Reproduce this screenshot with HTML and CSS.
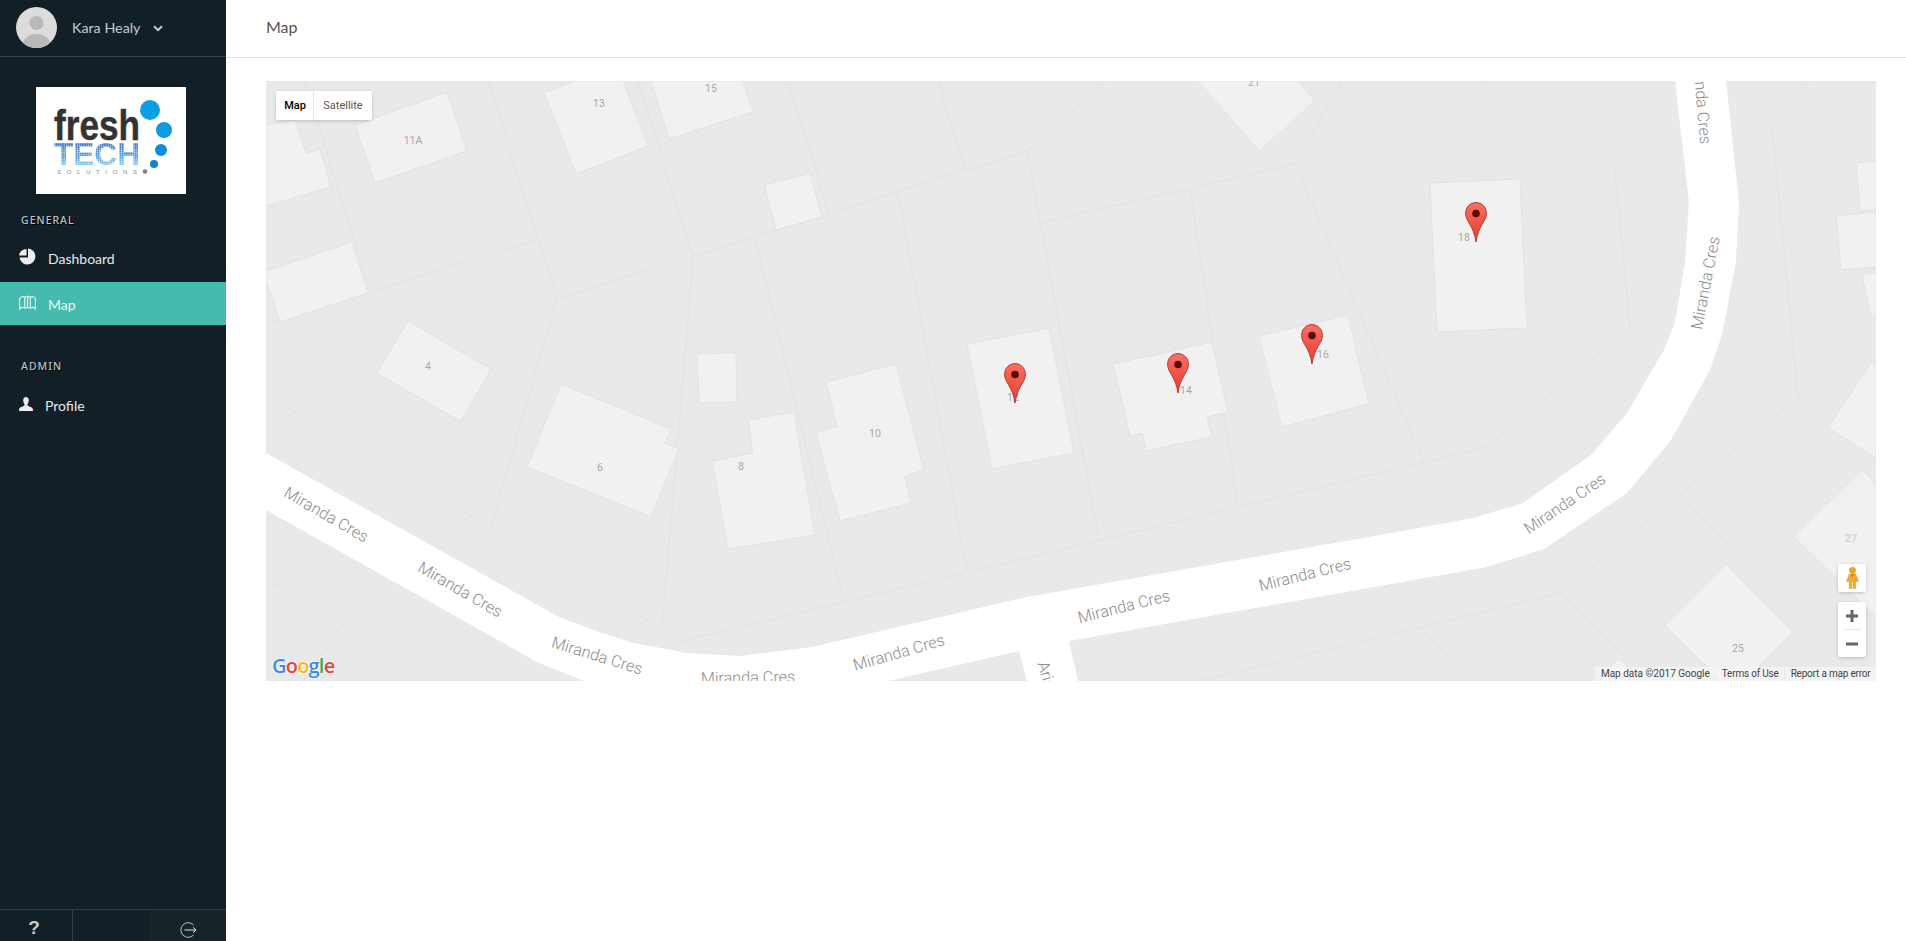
FILE: index.html
```html
<!DOCTYPE html>
<html lang="en">
<head>
<meta charset="utf-8">
<title>Map</title>
<link rel="stylesheet" href="styles.css">
</head>
<body>
<div class="app">
  <aside class="sidebar">
    <div class="profile">
      <svg class="avatar" viewBox="0 0 41 41"><defs><clipPath id="av"><circle cx="20.5" cy="20.5" r="20.5"/></clipPath></defs><g clip-path="url(#av)"><rect width="41" height="41" fill="#dcdcdc"/><circle cx="20.5" cy="16" r="7" fill="#b9b9b9"/><ellipse cx="20.5" cy="38" rx="14" ry="11" fill="#b9b9b9"/></g></svg>
      <span class="name">Kara Healy</span>
      <svg class="chev" viewBox="0 0 10 7"><path d="M1 1.2 5 5.2 9 1.2" fill="none" stroke="#c5d0d6" stroke-width="2"/></svg>
    </div>
    <div class="logo">
      <svg viewBox="0 0 150 107" width="150" height="107">
        <defs>
          <linearGradient id="tg" x1="0" y1="0" x2="0" y2="1"><stop offset="0" stop-color="#2f62c0"/><stop offset=".55" stop-color="#4f9ede"/><stop offset="1" stop-color="#a8dcf2"/></linearGradient>
          <pattern id="dp" width="2.2" height="2.2" patternUnits="userSpaceOnUse"><rect width="1.9" height="1.9" fill="#fff"/></pattern>
          <mask id="dm" maskUnits="userSpaceOnUse" x="0" y="0" width="150" height="107"><rect width="150" height="107" fill="url(#dp)"/></mask>
        </defs>
        <text class="lg-fresh" x="18" y="53" textLength="86" lengthAdjust="spacingAndGlyphs">fresh</text>
        <text class="lg-tech" x="18" y="78" textLength="86" lengthAdjust="spacingAndGlyphs" fill="url(#tg)" mask="url(#dm)">TECH</text>
        <text class="lg-sol" x="21" y="87" textLength="80">SOLUTIONS</text>
        <circle cx="114" cy="23" r="10" fill="#0a9fe3"/><circle cx="128" cy="43" r="8" fill="#0a9be0"/><circle cx="125" cy="63" r="6" fill="#0a8fd8"/><circle cx="118" cy="77" r="4" fill="#0a85cc"/><circle cx="109" cy="84.500" r="2.300" fill="#808080"/>
      </svg>
    </div>
    <h3 class="sec sec-general">GENERAL</h3>
    <a class="item item-dash">
      <svg class="ico" viewBox="0 0 17 17"><path d="M7.500 1.500A7.500 7.500 0 0 0 0 8h7.500Z" fill="#eee" transform="translate(0 -.6)"/><path d="M9 .5a8 8 0 1 1-8.500 9H9Z" fill="#eee"/></svg>
      <span>Dashboard</span>
    </a>
    <a class="item active">
      <svg class="ico" viewBox="0 0 17 15"><path d="M.6 3.500C2 1.500 4 1 5.700 2.500 7 1 10 1 11.300 2.500 13 1 15 1.500 16.400 3.500V14C15 12 13 11.800 11.300 13.300 10 12 7 12 5.700 13.300 4 11.800 2 12 .6 14ZM5.700 2.500V13.300M11.300 2.500V13.300M8.500 2V12.500" fill="none" stroke="#e9f6f4" stroke-width="1.100"/></svg>
      <span>Map</span>
    </a>
    <h3 class="sec sec-admin">ADMIN</h3>
    <a class="item item-profile">
      <svg class="ico-u" viewBox="0 0 15 15"><path d="M7.500 0C5.500 0 4.500 1.400 4.500 3.400 4.500 5.500 5.500 7 6 8 6 9.500 4 10 1.800 11 .5 11.600 0 12.500 0 15H15C15 12.500 14.500 11.600 13.200 11 11 10 9 9.500 9 8 9.500 7 10.500 5.500 10.500 3.400 10.500 1.400 9.500 0 7.500 0Z" fill="#eee"/></svg>
      <span>Profile</span>
    </a>
    <div class="foot">
      <div class="foot-q">?</div>
      <div class="foot-mid"></div>
      <div class="foot-out"><svg viewBox="0 0 18 18" width="18" height="18"><path d="M14.500 4A7.300 7.300 0 1 0 14.500 14" fill="none" stroke="#b9c2c7" stroke-width="1"/><path d="M5.500 9H17M14 6.300 17 9 14 11.700" fill="none" stroke="#dfe4e6" stroke-width="1"/></svg></div>
    </div>
  </aside>
  <main class="main">
    <header class="topbar"><h1>Map</h1></header>
    <section class="content">
      <div class="map">
        <svg class="canvas" viewBox="266 81 1610 600" width="1610" height="600">
          <defs>
            <linearGradient id="pg" x1="0" y1="0" x2="0" y2="1"><stop offset="0" stop-color="#fb6f64"/><stop offset="1" stop-color="#e53d2d"/></linearGradient>
            <g id="pin">
              <path d="M11 .6C5 .6.6 5.300.6 11.500.6 19.500 8.800 23.500 11 40 13.200 23.500 21.400 19.500 21.400 11.500 21.400 5.300 17 .6 11 .6Z" fill="url(#pg)" stroke="#b83a30" stroke-width="1"/>
              <circle cx="11" cy="11.500" r="3.800" fill="#5a0c08"/>
            </g>
          </defs>
          <polygon class="road" points="266,453 559,617 602,633 634,643 687,653 741,656 812,647 1027,597 1380,535 1473,518 1523,503 1591,455 1627,413 1664,350 1675,322 1685,262 1689,202 1675,81 1726,81 1739,202 1736,262 1722,335 1710,370 1671,440 1627,493 1544,549 1487,567 1069,641 1078,681 1027,681 1019,651 888,681 584,681 537,662 266,510"/>

          <polyline class="lot" points="305,81 370,292"/>
          <polyline class="lot" points="488,81 557,299 491,526"/>
          <polyline class="lot" points="266,325 538,239"/>
          <polyline class="lot" points="557,299 1027,151 1107,81"/>
          <polyline class="lot" points="638,81 693,257 662,628"/>
          <polyline class="lot" points="755,238 844,602"/>
          <polyline class="lot" points="266,395 682,641 1487,447 1630,328 1615,170 1481,81"/>
          <polyline class="lot" points="898,192 967,572"/>
          <polyline class="lot" points="1027,151 1099,540"/>
          <polyline class="lot" points="1040,223 1295,164 1342,81"/>
          <polyline class="lot" points="1190,189 1238,507"/>
          <polyline class="lot" points="1295,164 1424,462"/>
          <polyline class="lot" points="938,81 966,171"/>
          <polyline class="lot" points="788,81 829,213"/>
          <polyline class="lot" points="1809,81 1772,127 1798,397 1561,593 1199,681"/>
          <polyline class="lot" points="1798,397 1876,452"/>
          <polyline class="lot" points="1281,662 1299,681"/>
          <polyline class="lot" points="1420,627 1471,681"/>
          <polyline class="lot" points="1561,593 1650,681"/>
          <polyline class="lot" points="1680,495 1860,681"/>
          <polyline class="lot" points="266,580 437,681"/>
          <polyline class="lot" points="342,625 303,681"/>

          <polygon class="bld" points="447,92 467,151 375,183 355,125"/>
          <polygon class="bld" points="266,125 295,120 306,153 320,149 331,187 266,206"/>
          <polygon class="bld" points="544,93 575,81 623,81 648,146 576,174"/>
          <polygon class="bld" points="651,81 743,81 753,112 669,139"/>
          <polygon class="bld" points="266,271 352,242 368,293 280,322 266,280"/>
          <polygon class="bld" points="408,321 491,369 461,422 377,373"/>
          <polygon class="bld" points="561,384 671,429 665,443 679,449 651,517 527,467"/>
          <polygon class="bld" points="748,420 794,412 815,535 728,549 712,461 753,453"/>
          <polygon class="bld" points="697,354 736,353 737,402 699,403"/>
          <polygon class="bld" points="764,185 810,173 822,217 776,230"/>
          <polygon class="bld" points="826,382 896,364 924,470 905,476 911,503 840,521 816,433 837,426"/>
          <polygon class="bld" points="967,344 1049,328 1074,453 992,469"/>
          <polygon class="bld" points="1113,364 1212,342 1228,412 1207,417 1212,437 1146,451 1142,433 1130,436"/>
          <polygon class="bld" points="1259,336 1348,315 1369,404 1282,427"/>
          <polygon class="bld" points="1430,183 1520,179 1527,328 1437,332"/>
          <polygon class="bld" points="1198,81 1298,81 1315,101 1259,151"/>
          <polygon class="bld" points="1856,163 1876,161 1876,210 1860,211"/>
          <polygon class="bld" points="1836,216 1876,212 1876,267 1841,270"/>
          <polygon class="bld" points="1862,275 1876,272 1876,316 1871,318"/>
          <polygon class="bld" points="1871,362 1876,367 1876,458 1828,428"/>
          <polygon class="bld" points="1862,470 1876,484 1876,617 1794,537"/>
          <polygon class="bld" points="1726,564 1793,632 1744,681 1721,681 1665,625"/>
          <polygon class="bld" points="1619,658 1642,681 1596,681"/>

          <g class="num">
            <text x="413" y="144">11A</text><text x="599" y="107">13</text><text x="711" y="92">15</text><text x="428" y="370">4</text><text x="600" y="471">6</text><text x="741" y="470">8</text><text x="875" y="437">10</text><text x="1013" y="401">12</text><text x="1186" y="394">14</text><text x="1323" y="358">16</text><text x="1464" y="241">18</text><text x="1254" y="86">21</text><text class="num-b" x="1851" y="542">27</text><text x="1738" y="652">25</text>
          </g>
          <g class="street">
            <text transform="translate(326 515) rotate(30)" y="5">Miranda Cres</text>
            <text transform="translate(460 590) rotate(30)" y="5">Miranda Cres</text>
            <text transform="translate(597 656) rotate(17)" y="5">Miranda Cres</text>
            <text transform="translate(748 678) rotate(-1)" y="5">Miranda Cres</text>
            <text transform="translate(899 653) rotate(-16)" y="5">Miranda Cres</text>
            <text transform="translate(1124 607) rotate(-14)" y="5">Miranda Cres</text>
            <text transform="translate(1305 575) rotate(-14)" y="5">Miranda Cres</text>
            <text transform="translate(1565 504) rotate(-34)" y="5">Miranda Cres</text>
            <text transform="translate(1706 283) rotate(-79)" y="5">Miranda Cres</text>
            <text transform="translate(1701 97) rotate(85)" y="5">Miranda Cres</text>
            <text class="start" transform="translate(1042 662) rotate(72)" y="5">Ariel</text>
          </g>
          <use href="#pin" x="1004" y="363"/>
          <use href="#pin" x="1167" y="353"/>
          <use href="#pin" x="1301" y="324"/>
          <use href="#pin" x="1465" y="202"/>
        </svg>
        <div class="mtype"><span class="mt-on">Map</span><span class="mt-off">Satellite</span></div>
        <div class="gctl peg">
          <svg viewBox="0 0 14 24" width="13" height="22"><circle cx="7" cy="3.600" r="3.300" fill="#f4a90f" stroke="#c98a0a" stroke-width=".6"/><path d="M3.500 7.500H10.500L13.500 15.500 11.500 16 10.500 12V23.500H7.800V16H6.200V23.500H3.500V12L2.500 16 .5 15.500Z" fill="#f5ae13" stroke="#b3a07a" stroke-width=".6"/><path d="M5.500 8 7 11 8.500 8Z" fill="#d9572a"/></svg>
        </div>
        <div class="gctl zoom">
          <svg class="zi" viewBox="0 0 12 12" width="12" height="12"><path d="M0 6H12M6 0V12" stroke="#666" stroke-width="3"/></svg>
          <i class="zsep"></i>
          <svg class="zi" viewBox="0 0 12 12" width="12" height="12"><path d="M0 6H12" stroke="#666" stroke-width="3"/></svg>
        </div>
        <div class="glogo"><b class="c-b">G</b><b class="c-r">o</b><b class="c-y">o</b><b class="c-b">g</b><b class="c-g">l</b><b class="c-r">e</b></div>
        <div class="attr"><span>Map data ©2017 Google</span><span class="tight">Terms of Use</span><span class="tight">Report a map error</span></div>
      </div>
    </section>
  </main>
</div>
</body>
</html>
```
FILE: styles.css
```css
* { box-sizing: border-box; }
html, body { margin: 0; height: 100%; overflow: hidden; background: #fff; }
body { font-family: Lato, "Noto Sans", sans-serif; }
.app { display: flex; height: 941px; }

.sidebar { width: 226px; flex: none; background: #121f26; display: flex; flex-direction: column; }
.profile { height: 57px; border-bottom: 1px solid #3a454b; display: flex; align-items: center; padding: 0 0 1px 16px; }
.avatar { width: 41px; height: 41px; flex: none; }
.name { margin-left: 15px; width: 68px; font-size: 14.300px; white-space: nowrap; color: #c3ced4; margin-top: -1px; }
.chev { width: 10px; height: 7px; margin-left: 13px; margin-top: 2px; }
.logo { width: 150px; height: 107px; margin: 30px 0 0 36px; background: #fff; flex: none; }
.logo svg { display: block; }
.lg-fresh { font-family: "Liberation Sans", sans-serif; font-weight: 700; font-size: 42px; fill: #333; stroke: #333; stroke-width: .5px; }
.lg-tech { font-family: "Liberation Sans", sans-serif; font-weight: 700; font-size: 31px; }
.lg-sol { font-family: "Liberation Sans", sans-serif; font-size: 6px; fill: #8a8a8a; }

.sec { margin: 0; padding-left: 21px; font-family: "Noto Sans", sans-serif; font-size: 10.500px; line-height: 14px; font-weight: 500; letter-spacing: 1px; color: #b9c2c6; text-shadow: 1px 1px #000; }
.sec-general { margin-top: 19px; }
.sec-admin { margin-top: 34px; }
.item { height: 43px; display: flex; align-items: center; padding-left: 19px; color: #e4e9eb; font-size: 14px; }
.item-dash { margin-top: 9px; margin-bottom: 3px; }
.item span { margin-left: 12px; padding-top: 2px; }
.item .ico { width: 17px; height: 17px; flex: none; margin-top: -3px; }
.active { background: #45bbb0; color: #e8f7f5; }
.item-profile { margin-top: 10px; }
.item-profile span { margin-left: 12px; }
.ico-u { width: 14px; height: 14px; flex: none; margin-top: -2px; }
.foot { margin-top: auto; height: 32px; border-top: 1px solid #313c42; display: grid; grid-template-columns: 73px 76px 77px; }
.foot-q { border-right: 1px solid #313c42; padding-right: 4px; text-align: center; font-family: "Liberation Sans", sans-serif; font-weight: 700; font-size: 19px; line-height: 36px; color: #c3cacd; }
.foot-out { background: #172329; display: flex; align-items: center; justify-content: center; padding-top: 3px; }

.main { flex: 1; min-width: 0; display: flex; flex-direction: column; }
.topbar { height: 58px; border-bottom: 1px solid #e4e4e4; padding-left: 40px; display: flex; align-items: center; }
.topbar h1 { margin: 0 0 4px; font-size: 16px; font-weight: 400; color: #555; }
.content { padding: 23px 30px 0 40px; }

.map { position: relative; width: 1610px; height: 600px; background: #e9e9e9; overflow: hidden; }
.canvas { display: block; }
.road { fill: #fff; }
.lot { fill: none; stroke: #e2e2dd; stroke-width: 1; }
.bld { fill: #f1f1f1; stroke: #e2e2df; stroke-width: 1; }
.num text { font-family: Roboto, sans-serif; font-size: 10.500px; fill: #a8a8a8; text-anchor: middle; }
.num .num-b { font-weight: 700; font-size: 11px; fill: #d6d6d6; }
.street text { font-family: Roboto, sans-serif; font-weight: 300; font-size: 16.200px; fill: #8c8c8c; text-anchor: middle; }
.street .start { text-anchor: start; }

.mtype { position: absolute; left: 10px; top: 10px; height: 29px; display: flex; background: #fff; border-radius: 2px; box-shadow: 0 1px 4px -1px rgba(0,0,0,.3); font-family: Roboto, sans-serif; font-size: 11px; line-height: 29px; }
.mt-on { width: 38px; text-align: center; font-weight: 500; color: #000; border-right: 1px solid #e6e6e6; padding-left: 1px; }
.mt-off { width: 58px; text-align: center; color: #565656; }
.gctl { position: absolute; left: 1572px; width: 28px; background: #fff; border-radius: 2px; box-shadow: 0 1px 4px -1px rgba(0,0,0,.3); display: flex; flex-direction: column; align-items: center; }
.peg { top: 483px; height: 28px; justify-content: center; }
.zoom { top: 521px; height: 55px; }
.zi { margin-top: 8px; flex: none; }
.zsep { display: block; width: 19px; height: 1px; background: #e6e6e6; margin-top: 7px; margin-bottom: 0; }
.glogo { position: absolute; left: 6px; top: 572px; font-family: "Open Sans", sans-serif; font-size: 20px; line-height: 26px; letter-spacing: -.8px; text-shadow: 0 0 2px #fff, 0 0 2px #fff; }
.glogo b { font-weight: 600; }
.c-b { color: #4285f4; } .c-r { color: #ea4335; } .c-y { color: #fbbc05; } .c-g { color: #34a853; }
.attr { position: absolute; right: 0; bottom: 0; height: 14px; display: flex; gap: 1px; font-family: Roboto, sans-serif; font-size: 10px; line-height: 14px; color: #444; }
.attr span { background: rgba(245,245,245,.75); padding: 0 5.500px; white-space: nowrap; }
.attr .tight { letter-spacing: -.2px; }
```
